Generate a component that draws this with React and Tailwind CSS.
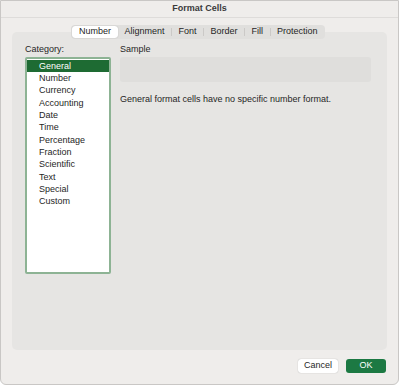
const tabs = ["Number", "Alignment", "Font", "Border", "Fill", "Protection"];
const categories = [
  "General",
  "Number",
  "Currency",
  "Accounting",
  "Date",
  "Time",
  "Percentage",
  "Fraction",
  "Scientific",
  "Text",
  "Special",
  "Custom",
];

export default function App() {
  return (
    <div
      className="w-[400px] h-[386px] bg-white text-[#262626]"
      style={{ fontFamily: "'Liberation Sans', Arial, sans-serif" }}
    >
      <div className="w-[399px] h-[385px] bg-[#efedeb] border border-[#c9c7c5] rounded-b-[6px] flex flex-col">
        {/* title bar */}
        <div className="h-[17px] shrink-0 border-b border-[#dedcda] flex items-center justify-center text-[9px] font-bold text-[#3a3a3a]">
          Format Cells
        </div>

        {/* panel + tabs */}
        <div className="relative mx-[11px] mt-[14px] h-[318px] bg-[#e6e5e3] rounded-[5px]">
          <div className="absolute left-[59px] top-[-7px] h-[14px] flex items-center bg-[#e0dfdd] rounded-[4px] p-[1px] text-[9px]">
            {tabs.map((t, i) => (
              <div key={t} className="flex items-center h-full">
                {i > 1 && <div className="w-px h-[8px] bg-[#cbc9c7]" />}
                <div
                  className={
                    i === 0
                      ? "h-full px-[7px] flex items-center bg-white rounded-[3px] shadow-[0_0_1px_rgba(0,0,0,0.3)]"
                      : "h-full px-[6.5px] flex items-center"
                  }
                >
                  {t}
                </div>
              </div>
            ))}
          </div>

          <div className="flex pt-[11px] pl-[13px] pr-[16px] text-[9px]">
            <div className="w-[86px] shrink-0">
              <div className="h-[13px] leading-[13px]">Category:</div>
              <div className="mt-[1px] h-[217px] bg-white border-2 border-[#8db394] rounded-[2px] pt-[0.5px]">
                {categories.map((c, i) => (
                  <div
                    key={c}
                    className={
                      i === 0
                        ? "h-[12.4px] leading-[12.4px] pl-[12px] bg-[#1e6b33] text-white"
                        : "h-[12.35px] leading-[12.35px] pl-[12px]"
                    }
                  >
                    {c}
                  </div>
                ))}
              </div>
            </div>

            <div className="flex-1 ml-[9px]">
              <div className="h-[13px] leading-[13px]">Sample</div>
              <div className="mt-[1px] h-[25px] bg-[#dfdedc] rounded-[3px]" />
              <div className="mt-[11px] leading-[13px]">
                General format cells have no specific number format.
              </div>
            </div>
          </div>
        </div>

        {/* buttons */}
        <div className="flex justify-end gap-[8px] mr-[12px] mt-[9px] text-[9px]">
          <button className="w-[40px] h-[14px] bg-white rounded-[3px] shadow-[0_0_1px_rgba(0,0,0,0.35)] text-[#262626]">
            Cancel
          </button>
          <button className="w-[40px] h-[14px] bg-[#1c7943] rounded-[3px] text-white">
            OK
          </button>
        </div>
      </div>
    </div>
  );
}
